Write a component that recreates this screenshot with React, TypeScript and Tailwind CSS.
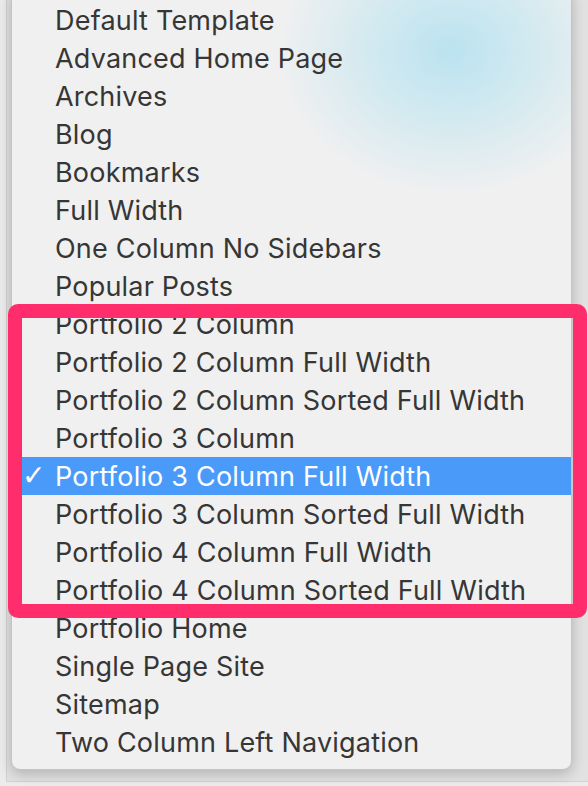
import React from "react";

const items = [
  "Default Template",
  "Advanced Home Page",
  "Archives",
  "Blog",
  "Bookmarks",
  "Full Width",
  "One Column No Sidebars",
  "Popular Posts",
  "Portfolio 2 Column",
  "Portfolio 2 Column Full Width",
  "Portfolio 2 Column Sorted Full Width",
  "Portfolio 3 Column",
  "Portfolio 3 Column Full Width",
  "Portfolio 3 Column Sorted Full Width",
  "Portfolio 4 Column Full Width",
  "Portfolio 4 Column Sorted Full Width",
  "Portfolio Home",
  "Single Page Site",
  "Sitemap",
  "Two Column Left Navigation",
];

export default function App() {
  return (
    <div
      className="relative w-[588px] h-[786px] overflow-hidden bg-[#ececec]"
      style={{ fontFamily: "Inter, 'Liberation Sans', sans-serif" }}
    >
      {/* panel behind the menu */}
      <div className="absolute left-[6px] top-0 w-[600px] h-[782px] bg-[#e2e2e2] border-l border-b border-[#d2d2d2]" />
      {/* the menu */}
      <div className="relative ml-[11px] w-[561px] h-[780px] -mt-[10px] pt-[10px] bg-[#f0f0f0] border border-[#c4c4c4] rounded-b-[9px] shadow-[0_4px_14px_rgba(0,0,0,0.22)] overflow-hidden">
        <div className="absolute right-[-60px] top-[-90px] w-[360px] h-[300px] bg-[radial-gradient(ellipse_at_center,rgba(184,226,240,0.95)_0%,rgba(196,230,240,0.7)_30%,rgba(240,240,240,0)_68%)]" />
        <div className="relative flex flex-col">
          {items.map((t, i) => {
            const sel = i === 12;
            return (
              <div
                key={t}
                className={
                  sel
                    ? "h-[38px] flex items-center bg-[#4a9bf9] text-white"
                    : "h-[38px] flex items-center text-[#363636]"
                }
              >
                <span
                  className="w-[43px] pl-[10px] text-[28px] font-bold leading-none"
                  style={{ fontFamily: "'DejaVu Sans', sans-serif" }}
                >
                  {sel ? "✓" : ""}
                </span>
                <span className="text-[27px] leading-none tracking-[0.2px]">{t}</span>
              </div>
            );
          })}
        </div>
      </div>
      {/* pink highlight frame */}
      <div className="absolute left-[8px] top-[304px] w-[579px] h-[314px] border-[14px] border-[#ff2d6c] rounded-[10px]" />
    </div>
  );
}
